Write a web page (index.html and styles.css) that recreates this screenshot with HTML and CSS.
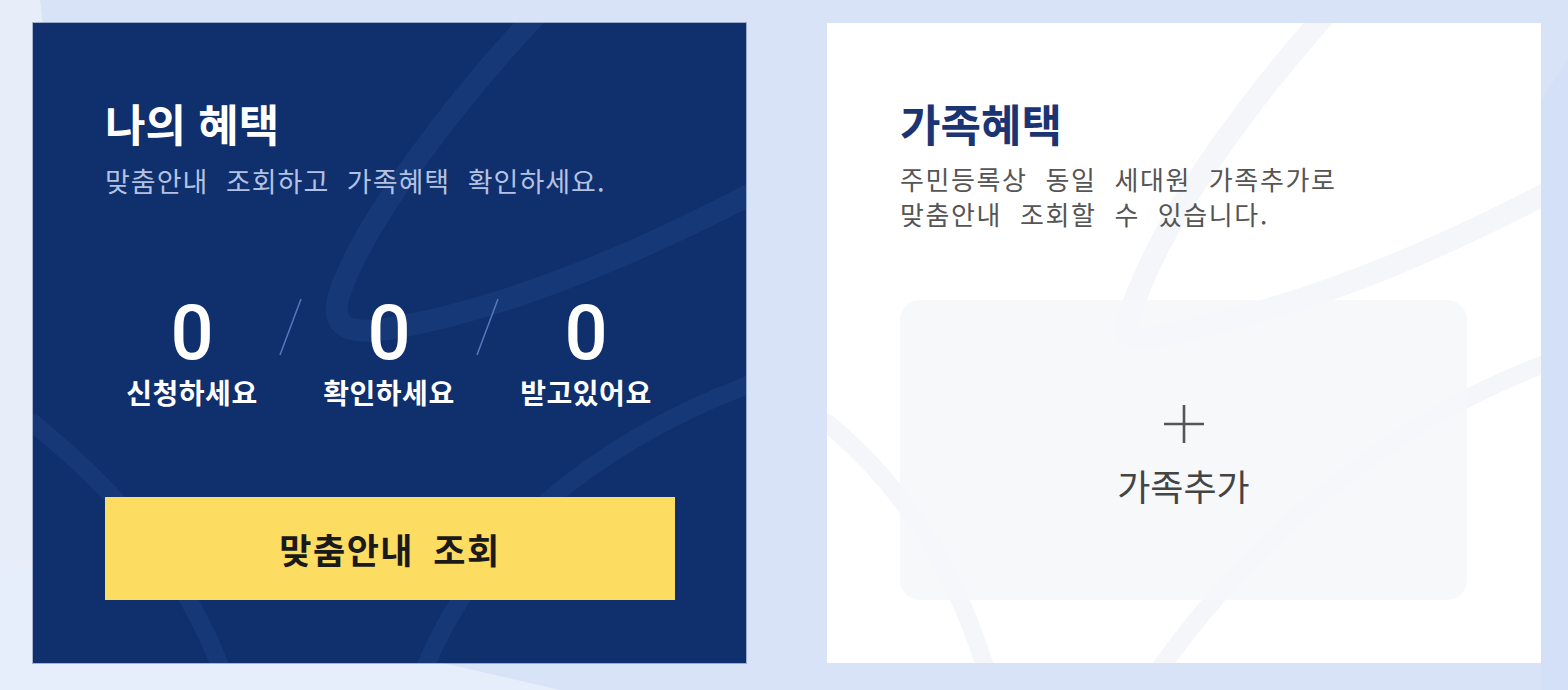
FILE: index.html
```html
<!DOCTYPE html>
<html lang="ko">
<head>
<meta charset="utf-8">
<title>나의 혜택</title>
<link rel="stylesheet" href="styles.css">
</head>
<body>
<main class="page">
  <svg class="page-deco" viewBox="0 0 1568 690" preserveAspectRatio="none" aria-hidden="true">
    <polygon points="0,0 40,0 120,690 0,690" fill="#e7edf9"/>
    <polygon points="0,560 0,690 560,690" fill="#e6eefb"/>
    <polygon points="1541,100 1568,60 1568,690 1541,690" fill="#d4e0f7"/>
  </svg>
  <section class="card card-mine">
    <svg class="deco" viewBox="0 0 713 640" aria-hidden="true">
      <path d="M505 -10 C420 80 330 200 306 272 C292 320 340 312 420 292 C520 266 620 222 720 170" class="deco-line-dark"/>
      <path d="M0 400 C60 450 140 520 190 650" class="deco-line-dark thin"/>
      <path d="M720 360 C560 420 440 520 390 650" class="deco-line-dark thin"/>
    </svg>
    <h2 class="title">나의 혜택</h2>
    <p class="desc">맞춤안내 조회하고 가족혜택 확인하세요.</p>
    <div class="stats">
      <div class="stat"><span class="num">0</span><span class="label">신청하세요</span></div>
      <svg class="sep" viewBox="0 0 23 60" aria-hidden="true"><line x1="22" y1="2" x2="1" y2="58"/></svg>
      <div class="stat"><span class="num">0</span><span class="label">확인하세요</span></div>
      <svg class="sep" viewBox="0 0 23 60" aria-hidden="true"><line x1="22" y1="2" x2="1" y2="58"/></svg>
      <div class="stat"><span class="num">0</span><span class="label">받고있어요</span></div>
    </div>
    <button class="btn" type="button">맞춤안내 조회</button>
  </section>
  <section class="card card-family">
    <svg class="deco" viewBox="0 0 714 640" aria-hidden="true">
      <path d="M500 -10 C420 80 330 200 300 300 C290 330 340 312 420 292 C520 266 620 222 720 170" class="deco-line-light"/>
      <path d="M0 400 C60 450 120 520 160 650" class="deco-line-light thin"/>
      <path d="M720 340 C560 400 420 520 330 650" class="deco-line-light thin"/>
    </svg>
    <h2 class="title title-navy">가족혜택</h2>
    <div class="desc desc-gray">
      <span class="desc-line">주민등록상 동일 세대원 가족추가로</span>
      <span class="desc-line">맞춤안내 조회할 수 있습니다.</span>
    </div>
    <div class="add-box">
      <svg class="plus" viewBox="0 0 42 40" aria-hidden="true"><path d="M21 1 V39 M1 20 H41"/></svg>
      <span class="add-text">가족추가</span>
    </div>
  </section>
</main>
</body>
</html>
```

FILE: styles.css
```css
* { box-sizing: border-box; }
html, body { margin: 0; padding: 0; }
body {
  width: 1568px;
  height: 690px;
  overflow: hidden;
  background: #d8e3f8;
  font-family: "Noto Sans CJK KR", "Noto Sans", sans-serif;
}
.page {
  position: relative;
  display: flex;
  gap: 81px;
  padding: 23px 27px 27px 33px;
  height: 690px;
}
.page-deco {
  position: absolute;
  inset: 0;
  width: 100%;
  height: 100%;
}
.card {
  position: relative;
  width: 713px;
  height: 640px;
  display: flex;
  flex-direction: column;
  padding: 76px 72px 63px 72px;
  overflow: hidden;
}
.card-family { width: 714px; padding: 76px 74px 63px 73px; }
.card-mine { background: #0f2f6d; box-shadow: 0 0 0 1px rgba(40,70,130,0.35); }
.card-family { background: #ffffff; }
.deco {
  position: absolute;
  inset: 0;
  width: 100%;
  height: 100%;
  pointer-events: none;
}
.deco path { fill: none; stroke-linecap: round; }
.deco-line-dark { stroke: rgba(70,120,200,0.12); stroke-width: 22; }
.deco-line-light { stroke: rgba(228,233,243,0.4); stroke-width: 22; }
.deco .thin { stroke-width: 18; }
.title, .desc, .stats, .btn, .add-box { position: relative; }
.title {
  margin: 0;
  font-size: 44px;
  line-height: 48px;
  font-weight: 700;
  color: #ffffff;
}
.title-navy { color: #1b3473; }
.desc {
  margin: 17px 0 0;
  font-size: 27px;
  line-height: 34px;
  color: #b3c2e2;
  letter-spacing: 1px;
  word-spacing: 9px;
}
.desc-gray {
  margin-top: 14px;
  color: #555555;
  display: flex;
  flex-direction: column;
}
.desc-line {
  display: block;
  font-size: 26px;
  line-height: 35px;
  height: 35px;
  letter-spacing: 1.6px;
}
.stats {
  margin-top: 97px;
  display: grid;
  grid-template-columns: 174px 23px 174px 23px 174px;
  align-items: start;
}
.stat {
  display: flex;
  flex-direction: column;
  align-items: center;
}
.num {
  font-family: Roboto, "Noto Sans", sans-serif;
  font-size: 76px;
  line-height: 76px;
  font-weight: 500;
  color: #ffffff;
}
.label {
  margin-top: 5px;
  font-size: 28px;
  line-height: 32px;
  font-weight: 700;
  color: #ffffff;
  letter-spacing: 0.5px;
}
.sep {
  width: 23px;
  height: 60px;
  margin-top: 2px;
}
.sep line { stroke: #5577bb; stroke-width: 1.5; }
.btn {
  margin-top: auto;
  width: 570px;
  height: 103px;
  border: 0;
  padding: 0;
  background: #fddc62;
  font-family: inherit;
  font-size: 35px;
  font-weight: 700;
  color: #1a1a1a;
  letter-spacing: 1.5px;
  word-spacing: 8px;
  cursor: pointer;
}
.add-box {
  margin-top: auto;
  height: 300px;
  border-radius: 20px;
  background: rgba(246,247,250,0.9);
  display: flex;
  flex-direction: column;
  align-items: center;
  justify-content: center;
  gap: 20px;
  padding-top: 10px;
}
.plus { width: 42px; height: 40px; }
.plus path { stroke: #555; stroke-width: 2.6; fill: none; }
.add-text {
  font-size: 36px;
  line-height: 42px;
  color: #444444;
}
```
